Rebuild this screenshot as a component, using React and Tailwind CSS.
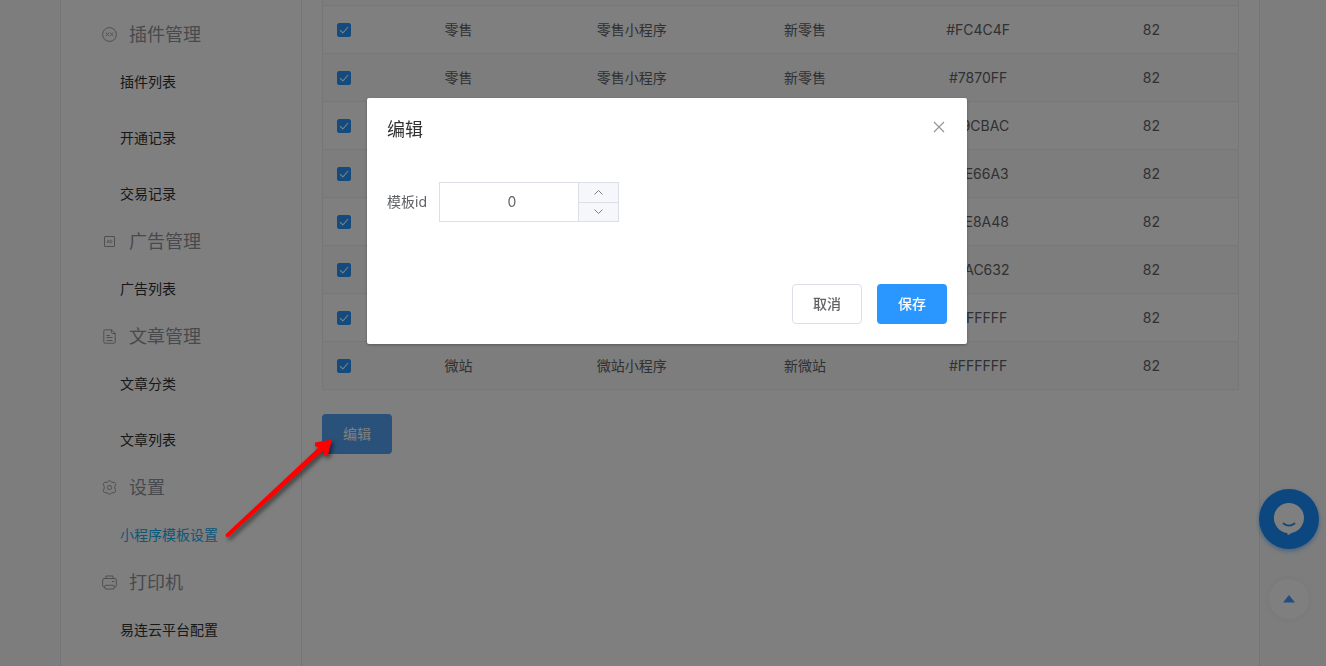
import React, { useState } from "react";

const menus = [
  {
    title: "插件管理",
    icon: "plugin",
    items: ["插件列表", "开通记录", "交易记录"],
  },
  { title: "广告管理", icon: "ad", items: ["广告列表"] },
  { title: "文章管理", icon: "article", items: ["文章分类", "文章列表"] },
  { title: "设置", icon: "setting", items: ["小程序模板设置"] },
  { title: "打印机", icon: "printer", items: ["易连云平台配置"] },
];

const rows = [
  { type: "零售", name: "零售小程序", template: "新零售", color: "#FC4C4F", id: 82 },
  { type: "零售", name: "零售小程序", template: "新零售", color: "#7870FF", id: 82 },
  { type: "零售", name: "零售小程序", template: "新零售", color: "#19CBAC", id: 82 },
  { type: "零售", name: "零售小程序", template: "新零售", color: "#FE66A3", id: 82 },
  { type: "零售", name: "零售小程序", template: "新零售", color: "#FE8A48", id: 82 },
  { type: "零售", name: "零售小程序", template: "新零售", color: "#5AC632", id: 82 },
  { type: "零售", name: "零售小程序", template: "新零售", color: "#FFFFFF", id: 82 },
  { type: "微站", name: "微站小程序", template: "新微站", color: "#FFFFFF", id: 82 },
];

const iconShapes = {
  plugin: (
    <>
      <circle cx="7.5" cy="7.5" r="6.9" />
      <path
        strokeWidth="0.7"
        d="M3.600 5.800c1.900 0 1.700 3 3.600 3M3.600 8.800c1.900 0 1.700-3 3.600-3M7.900 5.800c1.900 0 1.700 3 3.600 3M7.900 8.800c1.900 0 1.700-3 3.600-3"
      />
    </>
  ),
  ad: (
    <>
      <rect x="2.500" y="2.500" width="10" height="10" rx="0.5" />
      <path
        strokeWidth="0.6"
        d="M5 9 6.200 6 7.400 9M5.500 8h1.400M8.200 6v3h.6c1.700 0 1.700-3 0-3z"
      />
    </>
  ),
  article: (
    <>
      <path d="M9.500.800H3.100a1.300 1.300 0 0 0-1.300 1.300v10.800a1.300 1.300 0 0 0 1.300 1.300h8.800a1.300 1.300 0 0 0 1.300-1.300V4.500zM9.500.800v2.700a1 1 0 0 0 1 1h2.700" />
      <path d="M4.500 6.500h3.500M4.500 8.500h6M4.500 11.500h6" />
    </>
  ),
  setting: (
    <>
      <path d="M6.100 1.400Q7.500-.100 8.900 1.400 9.700 2.500 11 2.300 13 2 13.500 3.600 13.900 4.900 13.200 5.600 12.100 7.500 13.200 9.400 14.200 10.700 13.300 11.900 12.500 12.900 11 12.700 9.700 12.500 8.900 13.600 7.500 15.100 6.100 13.600 5.300 12.500 4 12.700 2.500 12.900 1.700 11.900.800 10.700 1.800 9.400 2.900 7.500 1.800 5.600 1.100 4.900 1.500 3.600 2 2 4 2.300 5.300 2.500 6.100 1.400z" />
      <circle cx="7.500" cy="7.500" r="2.100" />
    </>
  ),
  printer: (
    <>
      <path d="M4 3.500V1h7v2.500M2.800 12H2a1.300 1.300 0 0 1-1.300-1.300V4.800A1.300 1.300 0 0 1 2 3.500h11a1.300 1.300 0 0 1 1.300 1.300v5.900A1.300 1.300 0 0 1 13 12h-.8" />
      <rect x="2.800" y="10.300" width="9.400" height="3.700" rx="1" />
      <path d="M10 6.500h2.200" />
    </>
  ),
};

const MenuIcon = ({ name }) => (
  <svg
    className="size-[15px] shrink-0"
    viewBox="0 0 15 15"
    fill="none"
    stroke="currentColor"
    strokeWidth="0.9"
    aria-hidden="true"
  >
    {iconShapes[name]}
  </svg>
);

const Sidebar = ({ active }) => (
  <nav className="w-[241px] shrink-0 border-r border-[#e8eaf0] pt-[15px] pb-2">
    {menus.map((menu) => (
      <section key={menu.title}>
        <h2 className="flex h-[39px] items-center gap-3 pl-[41px] text-lg text-[#909399]">
          <MenuIcon name={menu.icon} />
          {menu.title}
        </h2>
        <ul>
          {menu.items.map((item) => (
            <li key={item}>
              <a
                href="#"
                className={
                  item === active
                    ? "flex h-14 items-center pl-[59px] text-[#18b0f0]"
                    : "flex h-14 items-center pl-[59px] text-[#303133]"
                }
              >
                {item}
              </a>
            </li>
          ))}
        </ul>
      </section>
    ))}
  </nav>
);

const Checkbox = ({ label }) => (
  <label className="relative block size-3.5">
    <input
      type="checkbox"
      defaultChecked
      aria-label={label}
      className="peer block size-3.5 appearance-none rounded-xs border border-[#dcdfe6] bg-white checked:border-[#2997ff] checked:bg-[#2997ff]"
    />
    <svg
      className="pointer-events-none absolute inset-0 hidden size-3.5 peer-checked:block"
      viewBox="0 0 14 14"
      fill="none"
      stroke="#fff"
      strokeWidth="1.1"
    >
      <path d="M3 7.200 5.800 10 11 4" />
    </svg>
  </label>
);

const TemplateTable = () => (
  <table className="w-full table-fixed border-separate border-spacing-0 border-x border-[#ebeef5] text-center text-[#606266]">
    <colgroup>
      <col className="w-[49px]" />
      <col />
      <col />
      <col />
      <col />
      <col />
    </colgroup>
    <tbody>
      <tr className="h-[6px] bg-[#fafafa]">
        <td colSpan={6} className="border-b border-[#ebeef5]" />
      </tr>
      {rows.map((row, index) => (
        <tr
          key={index}
          className="h-12 odd:bg-[#fafafa] [&>td]:border-b [&>td]:border-[#ebeef5]"
        >
          <td className="pl-3.5">
            <Checkbox label={`${row.name} ${row.color}`} />
          </td>
          <td>{row.type}</td>
          <td>{row.name}</td>
          <td>{row.template}</td>
          <td>{row.color}</td>
          <td>{row.id}</td>
        </tr>
      ))}
    </tbody>
  </table>
);

const FloatingButtons = () => (
  <div className="fixed right-[7px] bottom-[47px] flex flex-col items-center gap-[30px]">
    <button
      type="button"
      aria-label="客服"
      className="flex size-[60px] items-center justify-center rounded-full bg-[#1890ff] shadow-[0_2px_4px_rgba(24,144,255,0.5)]"
    >
      <svg className="size-8" viewBox="0 0 32 32" aria-hidden="true">
        <path
          fill="#fff"
          d="M16 0a15 15 0 0 1 4.800 29.200c-2.400.800-4 1.800-6 3l-.600-2.300A15 15 0 0 1 16 0z"
        />
        <path
          d="M10.500 20.500c3.300 2.600 7.700 2.600 11 0"
          fill="none"
          stroke="#1890ff"
          strokeWidth="1.800"
          strokeLinecap="round"
        />
      </svg>
    </button>
    <button
      type="button"
      aria-label="回到顶部"
      className="flex size-10 items-center justify-center rounded-full bg-white shadow-[0_0_6px_rgba(0,0,0,0.06)]"
    >
      <svg className="h-2 w-3" viewBox="0 0 12 8" aria-hidden="true">
        <path fill="#409eff" d="M6 0l6 7.500H0z" />
      </svg>
    </button>
  </div>
);

const NumberInput = ({ id, value, onChange }) => (
  <div className="flex h-10 w-[180px] border border-[#dcdfe6]">
    <input
      id={id}
      type="text"
      inputMode="numeric"
      value={value}
      onChange={(e) => onChange(Number(e.target.value) || 0)}
      className="w-full min-w-0 flex-1 pl-1.5 text-center text-[#606266] outline-none"
    />
    <div className="flex w-10 shrink-0 flex-col divide-y divide-[#dcdfe6] border-l border-[#dcdfe6] bg-[#f5f7fa] text-[#606266]">
      <button
        type="button"
        aria-label="增加"
        className="flex flex-1 items-center justify-center"
        onClick={() => onChange(value + 1)}
      >
        <svg className="h-[5px] w-[9px]" viewBox="0 0 9 5" fill="none" stroke="currentColor" strokeWidth="0.800">
          <path d="M.5 4.500l4-4 4 4" />
        </svg>
      </button>
      <button
        type="button"
        aria-label="减少"
        className="flex flex-1 items-center justify-center"
        onClick={() => onChange(value - 1)}
      >
        <svg className="h-[5px] w-[9px]" viewBox="0 0 9 5" fill="none" stroke="currentColor" strokeWidth="0.800">
          <path d="M.5.500l4 4 4-4" />
        </svg>
      </button>
    </div>
  </div>
);

const EditDialog = () => {
  const [templateId, setTemplateId] = useState(0);

  return (
    <div className="fixed inset-0 flex items-start justify-center bg-black/50 pt-[98px] pl-2">
      <div
        role="dialog"
        aria-labelledby="dialog-title"
        className="w-[600px] rounded-xs bg-white shadow-[0_1px_3px_rgba(0,0,0,0.3)]"
      >
        <header className="flex items-center justify-between px-5 pt-5">
          <h1 id="dialog-title" className="text-lg leading-6 text-[#303133]">
            编辑
          </h1>
          <button type="button" aria-label="关闭" className="mb-1.5 p-0.5 text-[#909399]">
            <svg className="size-3" viewBox="0 0 12 12" fill="none" stroke="currentColor" strokeWidth="1.1">
              <path d="M1 1l10 10M11 1L1 11" />
            </svg>
          </button>
        </header>
        <div className="flex items-center gap-3 px-5 pt-10">
          <label htmlFor="template-id" className="text-[#606266]">
            模板id
          </label>
          <NumberInput id="template-id" value={templateId} onChange={setTemplateId} />
        </div>
        <footer className="flex justify-end gap-[15px] px-5 pt-[62px] pb-5">
          <button
            type="button"
            className="h-10 w-[70px] rounded border border-[#dcdfe6] font-medium text-[#606266]"
          >
            取消
          </button>
          <button type="button" className="h-10 w-[70px] rounded bg-[#2997ff] font-medium text-white">
            保存
          </button>
        </footer>
      </div>
    </div>
  );
};

// red pointer from the active menu item to the edit button
const Pointer = () => (
  <svg
    className="pointer-events-none absolute top-[430px] left-[215px] h-[120px] w-[130px] drop-shadow-[2px_3px_2px_rgba(0,0,0,0.5)]"
    viewBox="0 0 130 120"
    aria-hidden="true"
  >
    <path
      fill="#f00"
      d="M10.500 104.500 103.500 17.500 100 16V12.500L117 9.500 113 25H108V22L107 21.500 14 106.500Q11 108.500 10.500 104.500z"
    />
  </svg>
);

const App = () => {
  return (
    <div className="relative min-h-screen bg-[#fafafa] pr-1.5 font-[Inter,'Noto_Sans_CJK_SC',sans-serif] text-sm">
      <div className="mx-auto flex min-h-screen max-w-[1200px] border-x border-[#e8eaf0] bg-white">
        <Sidebar active="小程序模板设置" />
        <main className="min-w-0 flex-1 px-5">
          <TemplateTable />
          <button
            type="button"
            className="mt-6 h-10 w-[70px] rounded bg-[#54a3f5] text-white"
          >
            编辑
          </button>
        </main>
      </div>
      <FloatingButtons />
      <EditDialog />
      <Pointer />
    </div>
  );
};

export default App;
